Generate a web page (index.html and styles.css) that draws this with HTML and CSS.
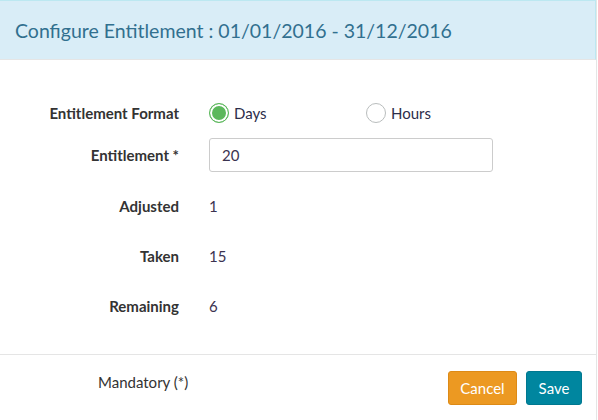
FILE: index.html
```html
<!DOCTYPE html>
<html>
<head>
<meta charset="utf-8">
<link rel="stylesheet" href="styles.css">
</head>
<body>
<div class="modal">
  <div class="modal-header">
    <h4 class="modal-title">Configure Entitlement : 01/01/2016 - 31/12/2016</h4>
  </div>
  <div class="modal-body">
    <div class="row row-radio">
      <label class="lbl">Entitlement Format</label>
      <div class="val radios">
        <span class="radio"><span class="dot checked"></span>Days</span>
        <span class="radio"><span class="dot"></span>Hours</span>
      </div>
    </div>
    <div class="row row-input">
      <label class="lbl">Entitlement *</label>
      <div class="val"><input class="input" type="text" value="20"></div>
    </div>
    <div class="row">
      <label class="lbl">Adjusted</label>
      <div class="val text">1</div>
    </div>
    <div class="row">
      <label class="lbl">Taken</label>
      <div class="val text">15</div>
    </div>
    <div class="row">
      <label class="lbl">Remaining</label>
      <div class="val text">6</div>
    </div>
  </div>
  <div class="modal-footer">
    <span class="mandatory">Mandatory (*)</span>
    <div class="buttons">
      <button class="btn btn-cancel">Cancel</button>
      <button class="btn btn-save">Save</button>
    </div>
  </div>
</div>
</body>
</html>
```
FILE: styles.css
```css
html, body {
  margin: 0;
  padding: 0;
  background: #fff;
}
body {
  font-family: Lato, "Open Sans", sans-serif;
  font-size: 15px;
  color: #333;
}
.modal {
  width: 597px;
  height: 420px;
  display: flex;
  flex-direction: column;
  border-right: 1px solid #e5e5e5;
  box-sizing: border-box;
}
.modal-header {
  background: #d9edf7;
  border-top: 1px solid #bce8f1;
  border-right: 1px solid #bce8f1;
  border-bottom: 1px solid #e5e5e5;
  height: 60px;
  box-sizing: border-box;
  padding: 0 15px;
  display: flex;
  align-items: center;
}
.modal-title {
  margin: 0;
  font-size: 19.5px;
  font-weight: normal;
  color: #31708f;
  padding-top: 1px;
}
.modal-body {
  flex: 1;
  padding: 33px 15px 0 15px;
  display: flex;
  flex-direction: column;
}
.row {
  display: grid;
  grid-template-columns: 164px 1fr;
  column-gap: 30px;
  align-items: center;
  height: 50px;
}
.row-radio {
  height: 40px;
}
.row-input {
  height: 44px;
  margin-bottom: 4px;
}
.lbl {
  text-align: right;
  font-weight: bold;
  color: #333;
}
.val {
  color: #3b3350;
}
.radios {
  display: flex;
}
.radio {
  display: flex;
  align-items: center;
  gap: 5px;
  width: 157px;
  color: #2c2d4a;
}
.dot {
  width: 18px;
  height: 18px;
  border: 1px solid #b9bdbd;
  border-radius: 50%;
  box-sizing: content-box;
  background: #fff;
}
.dot.checked {
  border-color: #5cb85c;
  background: #5cb85c;
  box-shadow: inset 0 0 0 2px #fff;
}
.input {
  width: 284px;
  height: 34px;
  box-sizing: border-box;
  border: 1px solid #ccc;
  border-radius: 3px;
  padding: 0 12px;
  font-family: Lato, sans-serif;
  font-size: 15px;
  color: #3b3350;
  outline: none;
}
.modal-footer {
  border-top: 1px solid #e5e5e5;
  height: 66px;
  box-sizing: border-box;
  padding: 15px 14px 15px 98px;
  display: flex;
  align-items: center;
  justify-content: space-between;
}
.mandatory {
  color: #333;
  margin-top: -12px;
}
.buttons {
  display: flex;
  gap: 9px;
}
.btn {
  height: 34px;
  border-radius: 3px;
  font-family: Lato, sans-serif;
  font-size: 15px;
  color: #fff;
  padding: 0;
  cursor: pointer;
}
.btn-cancel {
  background: #ec9922;
  border: 1px solid #dd8a16;
  width: 69px;
}
.btn-save {
  background: #00869f;
  border: 1px solid #007890;
  width: 56px;
}
```
